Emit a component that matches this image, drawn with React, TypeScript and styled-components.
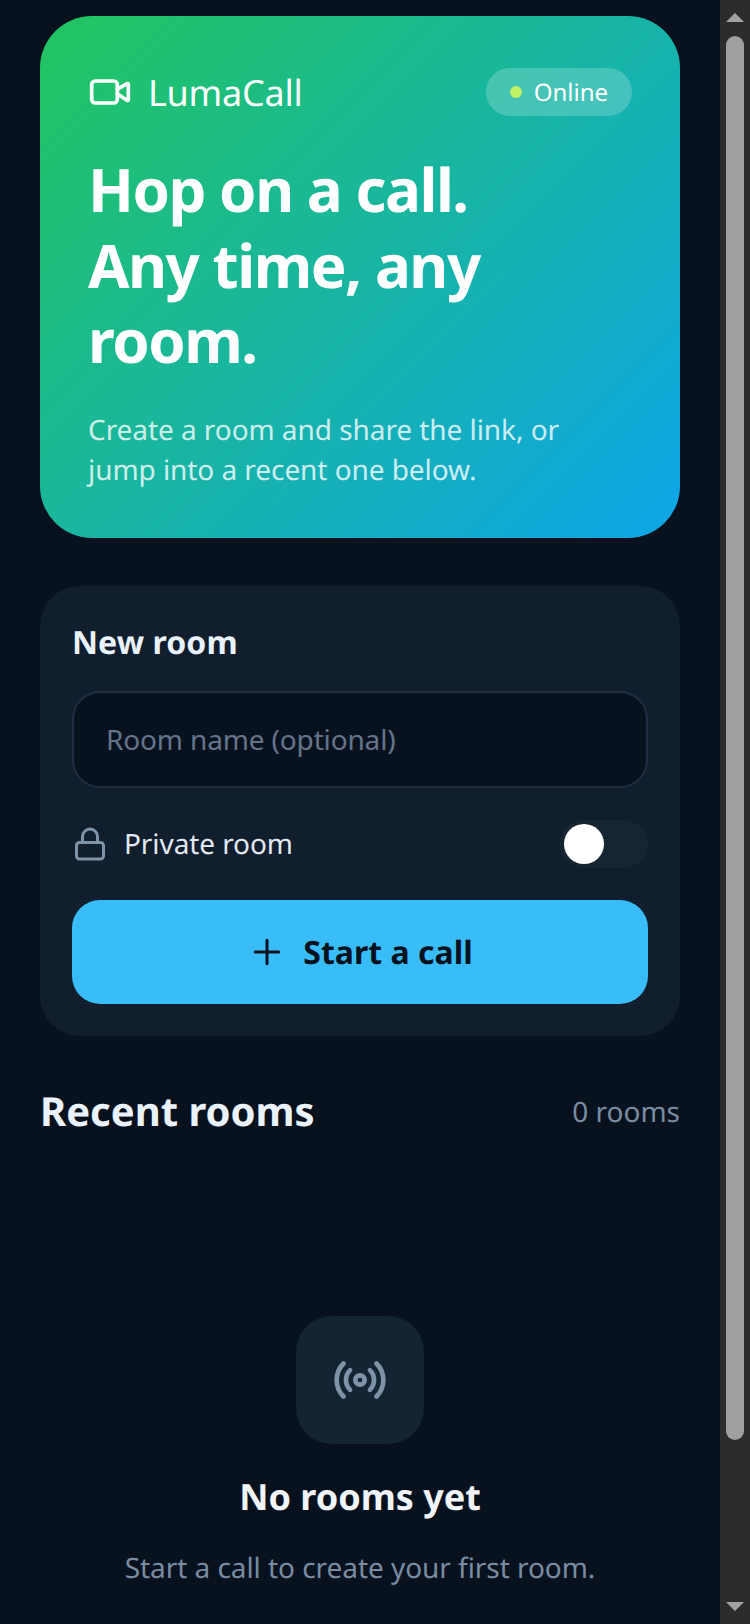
import React from "react"
import styled, { createGlobalStyle } from "styled-components"
import { Lock, Plus, Radio, Video } from "lucide-react"

const GlobalStyle = createGlobalStyle`
  html, body {
    margin: 0;
    height: 100%;
    overflow: hidden;
    background: #08121f;
  }
  body {
    font-family: "Noto Sans", sans-serif;
    text-rendering: geometricPrecision;
  }
  * {
    box-sizing: border-box;
  }
`

const Shell = styled.div`
  display: flex;
  height: 100vh;
  overflow: hidden;
`

const Page = styled.main`
  flex: 1;
  min-width: 0;
  padding: 16px 40px 0;
  display: flex;
  flex-direction: column;
`

const ScrollRail = styled.div`
  width: 30px;
  flex: none;
  background: #2c2c2c;
  display: flex;
  flex-direction: column;
  align-items: center;
`

const ArrowBox = styled.svg`
  flex: none;
  display: block;
`

const ScrollThumb = styled.div`
  width: 18px;
  height: 1404px;
  border-radius: 9px;
  background: #9f9f9f;
`

const ThumbSpace = styled.div`
  flex: 1;
  display: flex;
  flex-direction: column;
  padding-top: 6px;
`

const Hero = styled.section`
  height: 522px;
  flex: none;
  border-radius: 52px;
  padding: 52px 48px;
  background: linear-gradient(135deg, #22c55e 0%, #0ea5e9 100%);
  color: #fff;
`

const HeroTop = styled.div`
  display: flex;
  justify-content: space-between;
  align-items: center;
`

const Brand = styled.div`
  display: flex;
  align-items: center;
  gap: 16px;
  font-size: 36px;
`

const BrandName = styled.span`
  padding-top: 2px;
  line-height: 46px;
  letter-spacing: -0.25px;
`

const StatusPill = styled.div`
  display: flex;
  align-items: center;
  gap: 12px;
  height: 48px;
  padding: 0 24px;
  border-radius: 24px;
  background: rgba(255, 255, 255, 0.2);
  font-size: 24px;
`

const StatusDot = styled.span`
  width: 12px;
  height: 12px;
  border-radius: 50%;
  background: #bef264;
`

const HeroTitle = styled.h1`
  margin: 36px 0 0;
  font-size: 60px;
  line-height: 75.5px;
  font-weight: 700;
  letter-spacing: -1.45px;
`

const HeroText = styled.p`
  margin: 31px 0 0;
  max-width: 500px;
  font-size: 28px;
  line-height: 40px;
  letter-spacing: -0.06px;
  color: rgba(255, 255, 255, 0.8);
`

const Panel = styled.section`
  margin-top: 48px;
  flex: none;
  padding: 32px;
  border-radius: 40px;
  background: #101e2e;
  display: flex;
  flex-direction: column;
`

const PanelTitle = styled.h2`
  margin: 0;
  font-size: 32px;
  line-height: 50px;
  font-weight: 700;
  letter-spacing: 0.08px;
  color: #eaf3fc;
`

const RoomInput = styled.input`
  margin-top: 23px;
  height: 97px;
  padding: 0 32px 2px;
  border-radius: 28px;
  border: 2px solid #1f2e40;
  background: #08121f;
  font: 400 28px "Noto Sans", sans-serif;
  letter-spacing: -0.15px;
  color: #f1f5f9;
  outline: none;

  &::placeholder {
    color: #64748b;
    opacity: 1;
  }
`

const PrivateRow = styled.div`
  margin-top: 32px;
  display: flex;
  align-items: center;
  gap: 16px;
  height: 48px;
  color: #e2e8f0;
  font-size: 28px;
`

const PrivateLabel = styled.span`
  flex: 1;
  letter-spacing: -0.08px;
`

const Toggle = styled.div`
  width: 88px;
  height: 48px;
  padding: 4px;
  border-radius: 24px;
  background: #162534;
`

const ToggleKnob = styled.div`
  width: 40px;
  height: 40px;
  border-radius: 50%;
  background: #fff;
`

const StartButton = styled.button`
  margin-top: 32px;
  height: 104px;
  border: 0;
  border-radius: 28px;
  background: #38bdf8;
  color: #08121f;
  font: 700 32px "Noto Sans", sans-serif;
  text-rendering: geometricPrecision;
  display: flex;
  align-items: center;
  justify-content: center;
  gap: 16px;
`

const SectionHead = styled.div`
  margin-top: 48px;
  display: flex;
  justify-content: space-between;
  align-items: center;
`

const SectionTitle = styled.h2`
  margin: 0;
  font-size: 40px;
  line-height: 54px;
  font-weight: 700;
  color: #eaf3fc;
`

const RoomCount = styled.span`
  padding-top: 2px;
  font-size: 28px;
  color: #7a8ca1;
`

const EmptyState = styled.div`
  margin-top: 178px;
  display: flex;
  flex-direction: column;
  align-items: center;
`

const EmptyIcon = styled.div`
  width: 128px;
  height: 128px;
  border-radius: 36px;
  background: #142433;
  color: #7f93a8;
  display: flex;
  align-items: center;
  justify-content: center;
`

const EmptyTitle = styled.h3`
  margin: 28px 0 0;
  font-size: 36px;
  line-height: 50px;
  font-weight: 700;
  color: #f1f5f9;
`

const EmptyText = styled.p`
  margin: 26px 0 0;
  font-size: 28px;
  line-height: 40px;
  letter-spacing: -0.05px;
  color: #7a8ca1;
`

export default function App() {
  return (
    <Shell>
      <GlobalStyle />
      <Page>
        <Hero>
          <HeroTop>
            <Brand>
              <Video size={44} strokeWidth={2} />
              <BrandName>LumaCall</BrandName>
            </Brand>
            <StatusPill>
              <StatusDot />
              Online
            </StatusPill>
          </HeroTop>
          <HeroTitle>
            Hop on a call.
            <br />
            Any time, any room.
          </HeroTitle>
          <HeroText>Create a room and share the link, or jump into a recent one below.</HeroText>
        </Hero>

        <Panel>
          <PanelTitle>New room</PanelTitle>
          <RoomInput placeholder="Room name (optional)" />
          <PrivateRow>
            <Lock size={36} color="#7f93a8" strokeWidth={2} />
            <PrivateLabel>Private room</PrivateLabel>
            <Toggle>
              <ToggleKnob />
            </Toggle>
          </PrivateRow>
          <StartButton>
            <Plus size={40} strokeWidth={1.8} />
            Start a call
          </StartButton>
        </Panel>

        <SectionHead>
          <SectionTitle>Recent rooms</SectionTitle>
          <RoomCount>0 rooms</RoomCount>
        </SectionHead>

        <EmptyState>
          <EmptyIcon>
            <Radio size={56} strokeWidth={2} />
          </EmptyIcon>
          <EmptyTitle>No rooms yet</EmptyTitle>
          <EmptyText>Start a call to create your first room.</EmptyText>
        </EmptyState>
      </Page>

      <ScrollRail>
        <ArrowBox width="30" height="30" viewBox="0 0 30 30">
          <path d="M6 22 15 13 24 22Z" fill="#a3a3a3" />
        </ArrowBox>
        <ThumbSpace>
          <ScrollThumb />
        </ThumbSpace>
        <ArrowBox width="30" height="30" viewBox="0 0 30 30">
          <path d="M6 8 15 17 24 8Z" fill="#a3a3a3" />
        </ArrowBox>
      </ScrollRail>
    </Shell>
  )
}
